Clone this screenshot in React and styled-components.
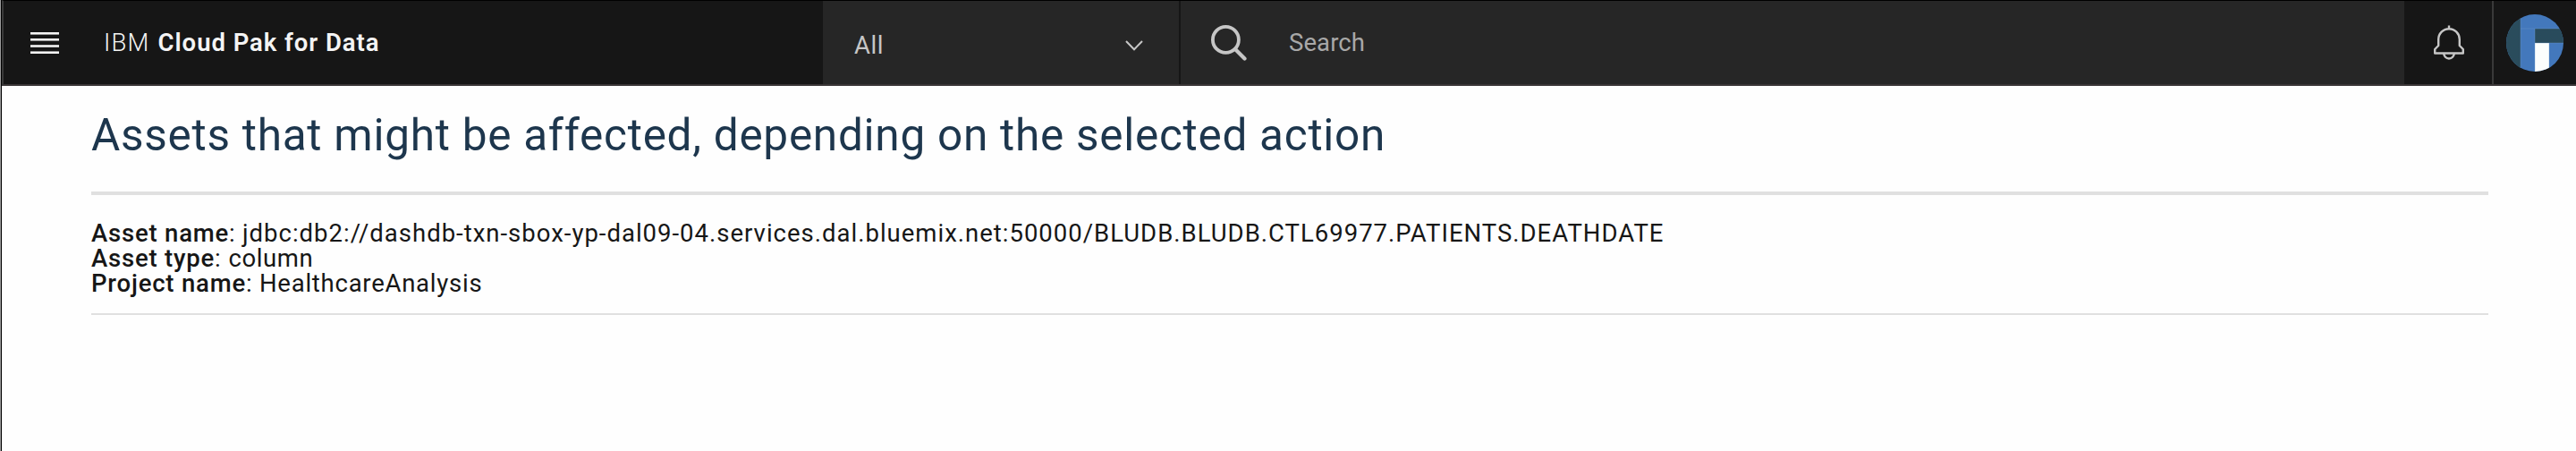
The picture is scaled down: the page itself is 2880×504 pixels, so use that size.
import React from "react";
import styled, { createGlobalStyle } from "styled-components";

const GlobalStyle = createGlobalStyle`
  * { box-sizing: border-box; }
  html, body { margin: 0; padding: 0; background: #fefefe; }
  body { font-family: Roboto, "Noto Sans", sans-serif; overflow: hidden; }
`;

const Page = styled.div`
  height: 504px;
  display: flex;
  flex-direction: column;
  border-left: 1px solid #9c9c9c;
  box-shadow: inset 1px 0 0 #000;
  padding-left: 1px;
`;

const Header = styled.header`
  height: 96px;
  flex: none;
  display: flex;
  border-top: 1px solid #000;
  border-left: 2px solid #393939;
  border-bottom: 2px solid #393536;
  background: #161616;
`;

const Brand = styled.div`
  width: 916px;
  flex: none;
  display: flex;
  align-items: center;
  padding-left: 30px;
`;

const Product = styled.div`
  display: flex;
  gap: 9px;
  padding-left: 50px;
  line-height: 32px;
  color: #f4f4f4;
`;

const Text = styled.span`
  font-size: ${(p) => p.$size || 27.5}px;
  font-weight: ${(p) => p.$weight || 400};
  letter-spacing: ${(p) => p.$track || 0}px;
  white-space: pre;
`;

const Scope = styled.div`
  width: 400px;
  flex: none;
  display: flex;
  align-items: center;
  justify-content: space-between;
  padding: 6px 40px 0 35px;
  border-right: 2px solid #161616;
  background: #262626;
  color: #c6c6c6;
`;

const SearchBox = styled.div`
  flex: 1;
  display: flex;
  align-items: center;
  gap: 47px;
  padding-left: 34px;
  background: #262626;
  color: #a8a8a8;
`;

const IconCell = styled.div`
  width: ${(p) => p.$width}px;
  flex: none;
  display: flex;
  align-items: center;
  justify-content: center;
  padding-left: ${(p) => p.$inset || 0}px;
  border-left: ${(p) => (p.$divided ? "2px solid #393939" : "none")};
`;

const Content = styled.main`
  padding: 0 98px 0 100px;
`;

const Title = styled.h1`
  margin: 0;
  height: 122px;
  padding-top: 25px;
  border-bottom: 4px solid #e0e0e0;
  line-height: 60px;
  font-weight: 400;
  color: #1d364d;
`;

const Details = styled.div`
  height: 134px;
  padding-top: 29px;
  border-bottom: 2px solid #e0e0e0;
  color: #161616;
`;

const Row = styled.div`
  display: flex;
  height: 28px;
  line-height: 28px;
`;

const Label = styled.div`
  width: ${(p) => p.$width}px;
  flex: none;
`;

const MenuIcon = () => (
  <svg width="32" height="24" viewBox="0 0 32 24" fill="#f4f4f4">
    <rect y="0" width="32" height="2.6" />
    <rect y="7" width="32" height="2.6" />
    <rect y="14.2" width="32" height="2.6" />
    <rect y="21.4" width="32" height="2.6" />
  </svg>
);

const Chevron = () => (
  <svg width="20" height="12" viewBox="0 0 20 12" fill="none" stroke="#c6c6c6" strokeWidth="2">
    <path d="M1 1l9 9.2L19 1" />
  </svg>
);

const SearchIcon = () => (
  <svg width="40" height="40" viewBox="0 0 40 40" fill="none" stroke="#c6c6c6" strokeWidth="3.8">
    <circle cx="16.4" cy="16.4" r="14.5" />
    <path d="M27 27l10.500 10.500" strokeWidth="4.2" strokeLinecap="round" />
  </svg>
);

const BellIcon = () => (
  <svg width="36" height="40" viewBox="0 0 36 40" fill="none" stroke="#c6c6c6" strokeWidth="2.4" strokeLinejoin="round">
    <path d="M18 0.500v4M6.200 23V16a11.800 11.800 0 0 1 23.600 0v7l4 4v4.500H2.200V27z" />
    <path d="M12.200 31.500a5.800 6 0 0 0 11.600 0" />
  </svg>
);

const Avatar = () => (
  <svg width="64" height="64" viewBox="0 0 64 64">
    <clipPath id="disc"><circle cx="32" cy="32" r="32" /></clipPath>
    <g clipPath="url(#disc)">
      <rect width="64" height="64" fill="#4479bc" />
      <rect width="16" height="64" fill="#2a4c5c" />
      <rect x="32" y="16" width="32" height="16" fill="#2a4c5c" />
      <rect x="32" y="32" width="16" height="32" fill="#fcfefd" />
      <path d="M16 16h48M32 16v48M16 0v64M32 32h32M48 32v32" stroke="#6f9ad0" strokeWidth="0.6" opacity="0.6" />
    </g>
  </svg>
);

const details = [
  { label: "Asset name", labelTrack: 0.8, width: 169, value: "jdbc:db2://dashdb-txn-sbox-yp-dal09-04.services.dal.bluemix.net:50000/BLUDB.BLUDB.CTL69977.PATIENTS.DEATHDATE", track: 1 },
  { label: "Asset type", labelTrack: 0.8, width: 153.5, value: "column", track: 0.6 },
  { label: "Project name", labelTrack: 0.8, width: 188, value: "HealthcareAnalysis", track: 0.75 },
];

export default function App() {
  return (
    <>
      <GlobalStyle />
      <Page>
        <Header>
          <Brand>
            <MenuIcon />
            <Product>
              <Text $weight={300} $track={1.2}>IBM</Text>
              <Text $weight={600} $track={0.95}>Cloud Pak for Data</Text>
            </Product>
          </Brand>
          <Scope>
            <Text $track={0.5}>All</Text>
            <Chevron />
          </Scope>
          <SearchBox>
            <SearchIcon />
            <Text $track={0.1}>Search</Text>
          </SearchBox>
          <IconCell $width={98} $inset={2}><BellIcon /></IconCell>
          <IconCell $width={94} $divided><Avatar /></IconCell>
        </Header>
        <Content>
          <Title>
            <Text $size={49.5} $track={0.73}>Assets that might be affected, depending on the selected action</Text>
          </Title>
          <Details>
            {details.map((d) => (
              <Row key={d.label}>
                <Label $width={d.width}>
                  <Text $weight={500} $track={d.labelTrack}>{d.label}</Text>
                  <Text>:</Text>
                </Label>
                <Text $track={d.track}>{d.value}</Text>
              </Row>
            ))}
          </Details>
        </Content>
      </Page>
    </>
  );
}
